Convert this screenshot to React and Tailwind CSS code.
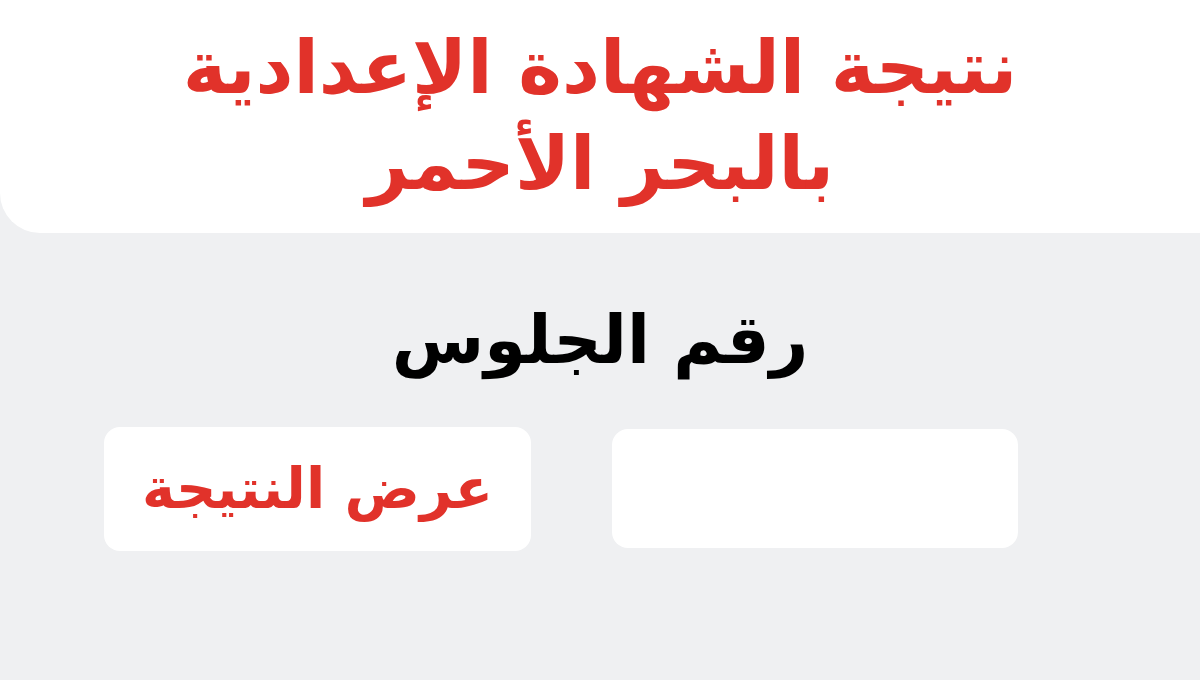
export default function App() {
  return (
    <div
      dir="rtl"
      className="w-[1200px] h-[680px] overflow-hidden bg-[#eff0f2]"
      style={{ fontFamily: '"DejaVu Sans", sans-serif' }}
    >
      <header className="h-[233px] bg-white rounded-bl-[40px] rounded-br-[40px] mr-[-40px] flex flex-col items-center justify-center pr-[40px]">
        <h1 className="text-[#e1322a] font-bold text-[74px] leading-[96px] text-center pb-[4px]">
          نتيجة الشهادة الإعدادية
          <br />
          بالبحر الأحمر
        </h1>
      </header>

      <main className="flex flex-col items-center pt-[62px]">
        <h2 className="text-black font-bold text-[67px] leading-[90px]">رقم الجلوس</h2>
        <div className="flex gap-[81px] mt-[44px] pr-[78px]">
          <input
            type="text"
            className="w-[406px] h-[119px] bg-white rounded-[16px] outline-none px-6 text-3xl"
          />
          <button className="w-[427px] h-[124px] -mt-[2px] bg-white rounded-[16px] text-[#e1322a] font-bold text-[56px]">
            عرض النتيجة
          </button>
        </div>
      </main>
    </div>
  )
}
